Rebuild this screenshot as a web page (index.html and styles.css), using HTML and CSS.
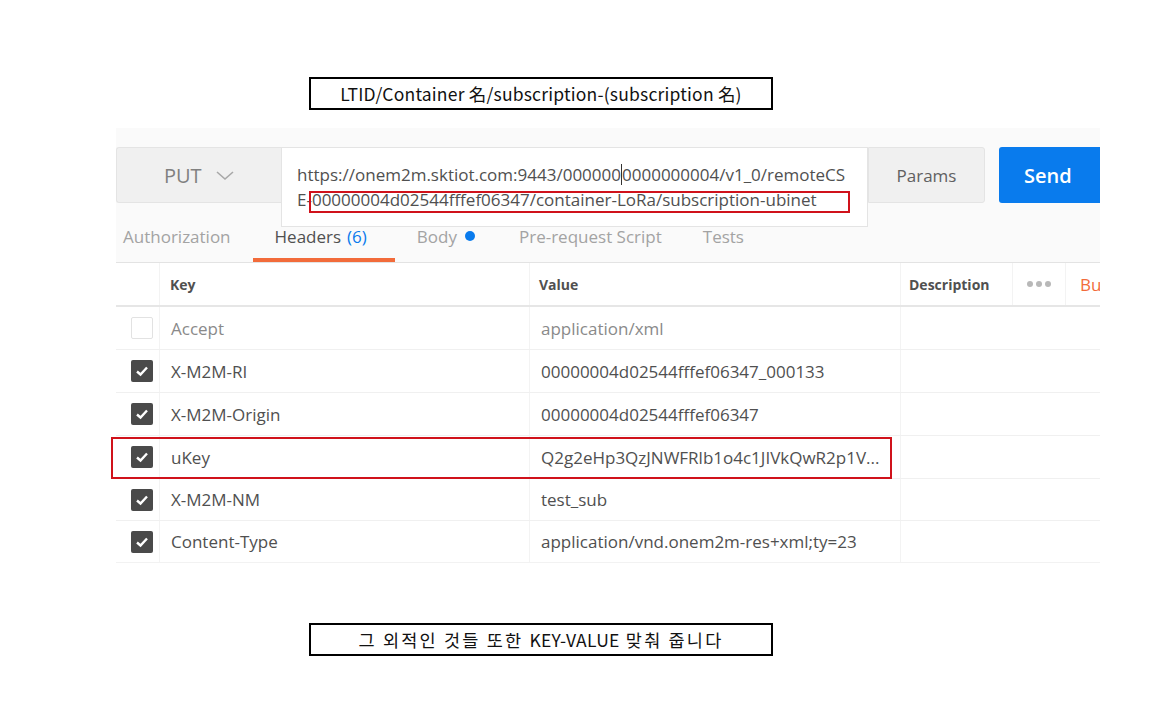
FILE: index.html
```html
<!DOCTYPE html>
<html>
<head>
<meta charset="utf-8">
<link rel="stylesheet" href="styles.css">
</head>
<body>
<div class="caption caption-top"><span>LTID/Container 名/subscription-(subscription 名)</span></div>

<div class="shot">
  <div class="top-panel">
    <div class="req-bar">
      <div class="method">PUT
        <svg class="chev" width="18" height="10" viewBox="0 0 18 10"><path d="M1 1 L9 8 L17 1" fill="none" stroke="#a8a8a8" stroke-width="1.6"/></svg>
      </div>
      <div class="url-slot">
        <div class="url-box">
          <div class="url-line">https://onem2m.sktiot.com:9443/000000<span class="cursor"></span>0000000004/v1_0/remoteCS</div>
          <div class="url-line">E-00000004d02544fffef06347/container-LoRa/subscription-ubinet</div>
          <div class="hl-url"></div>
        </div>
      </div>
      <div class="params">Params</div>
      <div class="send">Send</div>
    </div>
    <div class="tabs">
      <div class="tab tab-first">Authorization</div>
      <div class="tab active">Headers <span class="count">(6)</span></div>
      <div class="tab">Body <span class="dot"></span></div>
      <div class="tab">Pre-request Script</div>
      <div class="tab tab-tests">Tests</div>
    </div>
  </div>

  <div class="table">
    <div class="row head">
      <div class="c-check"></div>
      <div class="c-key">Key</div>
      <div class="c-val">Value</div>
      <div class="c-desc">Description</div>
      <div class="c-more"><span class="d"></span><span class="d"></span><span class="d"></span></div>
      <div class="c-bulk">Bulk Edit</div>
    </div>
    <div class="row off">
      <div class="c-check"><span class="box empty"></span></div>
      <div class="c-key">Accept</div>
      <div class="c-val">application/xml</div>
      <div class="c-desc"></div>
    </div>
    <div class="row">
      <div class="c-check"><span class="box"><svg width="14" height="12" viewBox="0 0 14 12"><path d="M2 6.5 L5.5 9.5 L12 2.5" fill="none" stroke="#fff" stroke-width="2.4"/></svg></span></div>
      <div class="c-key">X-M2M-RI</div>
      <div class="c-val">00000004d02544fffef06347_000133</div>
      <div class="c-desc"></div>
    </div>
    <div class="row">
      <div class="c-check"><span class="box"><svg width="14" height="12" viewBox="0 0 14 12"><path d="M2 6.5 L5.5 9.5 L12 2.5" fill="none" stroke="#fff" stroke-width="2.4"/></svg></span></div>
      <div class="c-key">X-M2M-Origin</div>
      <div class="c-val">00000004d02544fffef06347</div>
      <div class="c-desc"></div>
    </div>
    <div class="row marked">
      <div class="c-check"><span class="box"><svg width="14" height="12" viewBox="0 0 14 12"><path d="M2 6.5 L5.5 9.5 L12 2.5" fill="none" stroke="#fff" stroke-width="2.4"/></svg></span></div>
      <div class="c-key">uKey</div>
      <div class="c-val">Q2g2eHp3QzJNWFRlb1o4c1JIVkQwR2p1V...</div>
      <div class="c-desc"></div>
      <div class="hl-row"></div>
    </div>
    <div class="row short">
      <div class="c-check"><span class="box"><svg width="14" height="12" viewBox="0 0 14 12"><path d="M2 6.5 L5.5 9.5 L12 2.5" fill="none" stroke="#fff" stroke-width="2.4"/></svg></span></div>
      <div class="c-key">X-M2M-NM</div>
      <div class="c-val">test_sub</div>
      <div class="c-desc"></div>
    </div>
    <div class="row last">
      <div class="c-check"><span class="box"><svg width="14" height="12" viewBox="0 0 14 12"><path d="M2 6.5 L5.5 9.5 L12 2.5" fill="none" stroke="#fff" stroke-width="2.4"/></svg></span></div>
      <div class="c-key">Content-Type</div>
      <div class="c-val">application/vnd.onem2m-res+xml;ty=23</div>
      <div class="c-desc"></div>
    </div>
  </div>
</div>

<div class="caption caption-bottom"><span>그 외적인 것들 또한 <span class="latin">KEY-VALUE</span> 맞춰 줍니다</span></div>
</body>
</html>
```

FILE: styles.css
```css
* { box-sizing: border-box; }
html, body { margin: 0; padding: 0; background: #fff; }
body {
  width: 1165px;
  height: 705px;
  overflow: hidden;
  font-family: "Open Sans", "Noto Sans CJK KR", sans-serif;
}

.caption {
  width: 464px;
  height: 33px;
  margin-left: 309px;
  border: 2px solid #000;
  font-family: "Noto Sans CJK KR", "Noto Sans", sans-serif;
  font-size: 17.5px;
  color: #111;
  display: flex;
  align-items: center;
  justify-content: center;
  line-height: 1;
  white-space: nowrap;
}
.caption-top { margin-top: 77px; letter-spacing: 0.2px; }
.caption-bottom { margin-top: 60px; font-size: 17.5px; letter-spacing: 2.2px; }
.caption-bottom .latin { letter-spacing: 0.3px; }

.shot {
  margin-left: 116px;
  margin-top: 18px;
  width: 984px;
  clip-path: inset(-6px 0 -6px -10px);
}

.top-panel {
  background: #fafafa;
  padding-top: 19px;
  border-bottom: 1px solid #e3e3e3;
}

.req-bar {
  display: flex;
  height: 56px;
}
.req-bar > div { flex-shrink: 0; }
.method {
  width: 165px;
  background: #f0f0f0;
  border: 1px solid #e4e4e4;
  border-right: none;
  border-radius: 3px 0 0 3px;
  display: flex;
  align-items: center;
  padding-left: 47px;
  font-size: 20px;
  color: #808080;
  gap: 14px;
}
.chev { margin-top: 2px; }
.url-slot {
  width: 587px;
  position: relative;
}
.url-box {
  position: absolute;
  left: 0; top: 0;
  width: 587px;
  height: 80px;
  background: #fff;
  border: 1px solid #e4e4e4;
  padding: 14px 0 0 15px;
  z-index: 2;
}
.url-line {
  font-size: 17px;
  line-height: 25px;
  color: #505050;
  white-space: nowrap;
}
.cursor {
  display: inline-block;
  width: 1px;
  height: 21px;
  background: #333;
  vertical-align: -4px;
}
.hl-url {
  position: absolute;
  left: 27px;
  top: 43px;
  width: 541px;
  height: 22px;
  border: 2px solid #d0121b;
}
.params {
  width: 117px;
  background: #f0f0f0;
  border: 1px solid #e4e4e4;
  border-radius: 0 3px 3px 0;
  display: flex;
  align-items: center;
  justify-content: center;
  font-size: 17px;
  color: #606060;
}
.send {
  margin-left: 14px;
  width: 120px;
  background: #097bed;
  border-radius: 3px 0 0 3px;
  color: #fff;
  font-weight: 600;
  font-size: 20px;
  display: flex;
  align-items: center;
  padding-left: 25px;
}

.tabs {
  display: flex;
  height: 59px;
  align-items: stretch;
}
.tab {
  padding: 0 22px;
  font-size: 17px;
  color: #a3a3a3;
  display: flex;
  align-items: center;
  gap: 6px;
  padding-top: 11px;
  border-bottom: 4px solid transparent;
  flex-shrink: 0;
}
.tab-first { padding-left: 7px; }
.tab-tests { padding-left: 19px; }
.tab.active {
  color: #505050;
  border-bottom-color: #f26b3a;
  padding-right: 28px;
}
.count { color: #097bed; }
.dot {
  width: 10px; height: 10px;
  border-radius: 50%;
  background: #097bed;
  display: inline-block;
  margin-left: 2px;
}

.table { background: #fff; }
.row {
  display: flex;
  height: 43px;
  border-bottom: 1px solid #f0f0f0;
  position: relative;
  font-size: 17px;
  color: #505050;
}
.row.short { height: 42px; }
.row.last { border-bottom: 1px solid #f2f2f2; height: 42px; }
.row.head {
  border-bottom: 2px solid #e6e6e6;
  font-size: 14px;
  font-weight: 700;
  height: 44px;
}
.row > div { display: flex; align-items: center; flex-shrink: 0; }
.c-check {
  width: 44px;
  padding-left: 15px;
  border-right: 1px solid #f3f3f3;
}
.c-key {
  width: 370px;
  padding-left: 11px;
  border-right: 1px solid #f3f3f3;
}
.c-val {
  width: 371px;
  padding-left: 11px;
  border-right: 1px solid #f3f3f3;
  white-space: nowrap;
}
.row.head .c-key { padding-left: 10px; }
.row.head .c-val { padding-left: 9px; }
.c-desc {
  width: 112px;
  padding-left: 8px;
}
.row.head .c-desc { border-right: 1px solid #f3f3f3; }
.c-more {
  width: 53px;
  justify-content: center;
  gap: 3px;
  border-right: 1px solid #f3f3f3;
}
.c-more .d {
  width: 6px; height: 6px;
  border-radius: 50%;
  background: #b8b8b8;
}
.c-bulk {
  padding-left: 14px;
  font-weight: 400;
  font-size: 17px;
  color: #f26b3a;
  white-space: nowrap;
}
.row.off { color: #8a8a8a; }

.box {
  width: 22px; height: 22px;
  border-radius: 2px;
  background: #4a4a4a;
  display: flex;
  align-items: center;
  justify-content: center;
}
.box.empty {
  background: #fff;
  border: 1px solid #e2e2e2;
}
.hl-row {
  position: absolute;
  left: -5px;
  top: 1px;
  width: 781px;
  height: 42px;
  border: 2px solid #d0121b;
}
```
